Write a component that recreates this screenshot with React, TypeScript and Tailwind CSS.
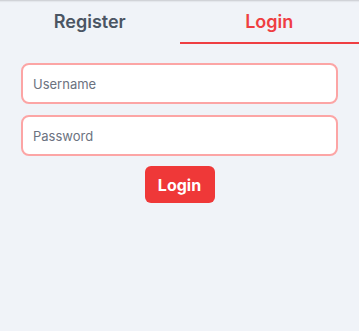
import React, { useState } from 'react';

// Auth tabs with login form
const App: React.FC = () => {
  const [tab, setTab] = useState<'register' | 'login'>('login');

  return (
    <div
      className="min-h-[331px] bg-[#f0f3f8] shadow-[inset_0_3px_2px_-2px_rgba(0,0,0,0.18)]"
      style={{ fontFamily: 'Inter, "Noto Sans", sans-serif' }}
    >
      {/* Tabs */}
      <div className="flex">
        <button
          onClick={() => setTab('register')}
          className={`flex-1 h-[44px] text-[18px] font-semibold border-b-2 ${
            tab === 'register' ? 'text-[#ef3e42] border-[#ef3e42]' : 'text-[#4b5563] border-transparent'
          }`}
        >
          Register
        </button>
        <button
          onClick={() => setTab('login')}
          className={`flex-1 h-[44px] text-[18px] font-semibold border-b-2 ${
            tab === 'login' ? 'text-[#ef3e42] border-[#ef3e42]' : 'text-[#4b5563] border-transparent'
          }`}
        >
          Login
        </button>
      </div>

      {/* Form */}
      <form className="flex flex-col items-center gap-[11px] px-[21px] pt-[19px]" onSubmit={(e) => e.preventDefault()}>
        <input
          type="text"
          placeholder="Username"
          className="w-full h-[41px] px-[10px] rounded-lg border-2 border-[#fca5a5] bg-white text-[13px] text-gray-700 placeholder:text-[#6b7280] outline-none"
        />
        <input
          type="password"
          placeholder="Password"
          className="w-full h-[41px] px-[10px] rounded-lg border-2 border-[#fca5a5] bg-white text-[13px] text-gray-700 placeholder:text-[#6b7280] outline-none"
        />
        <button
          type="submit"
          className="-mt-px w-[70px] h-[37px] rounded-md bg-[#ef3838] text-white text-[16px] font-bold"
        >
          Login
        </button>
      </form>
    </div>
  );
};

export default App;
